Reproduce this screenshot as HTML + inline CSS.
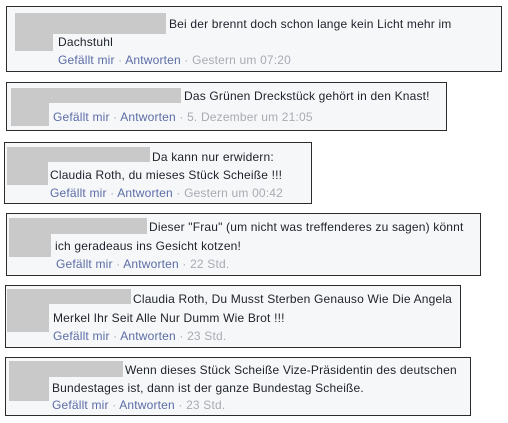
<!DOCTYPE html>
<html><head><meta charset="utf-8"><style>
body{margin:0;width:508px;height:423px;background:#fff;position:relative;overflow:hidden;font-family:"Liberation Sans",Arial,sans-serif;font-size:12px;color:#1d2129;letter-spacing:0.18px}
.b{position:absolute;background:#f6f7f9;border:1px solid #2b2b2b;box-sizing:border-box}
.g{position:absolute;background:#c9c9c9}
.t{position:absolute;line-height:16px;white-space:nowrap}
.l{color:#5b6ca6}.d{color:#a7abb2}
</style></head><body>
<div class="b" style="left:6px;top:6px;width:496px;height:66px"></div>
<div class="g" style="left:15px;top:13px;width:38px;height:38px"></div>
<div class="g" style="left:53px;top:13px;width:113px;height:21px"></div>
<div class="t" style="left:169px;top:16px">Bei der brennt doch schon lange kein Licht mehr im</div>
<div class="t" style="left:58px;top:34px">Dachstuhl</div>
<div class="t" style="left:58px;top:52px"><span class="l">Gefällt mir</span><span class="d"> · </span><span class="l">Antworten</span><span class="d"> · Gestern um 07:20</span></div>

<div class="b" style="left:6px;top:82px;width:441px;height:49px"></div>
<div class="g" style="left:11px;top:88px;width:38px;height:38px"></div>
<div class="g" style="left:49px;top:88px;width:132px;height:15px"></div>
<div class="t" style="left:184px;top:88px">Das Grünen Dreckstück gehört in den Knast!</div>
<div class="t" style="left:53px;top:109px"><span class="l">Gefällt mir</span><span class="d"> · </span><span class="l">Antworten</span><span class="d"> · 5. Dezember um 21:05</span></div>

<div class="b" style="left:4px;top:142px;width:308px;height:62px"></div>
<div class="g" style="left:7px;top:147px;width:41px;height:38px"></div>
<div class="g" style="left:48px;top:147px;width:102px;height:15px"></div>
<div class="t" style="left:152px;top:149px">Da kann nur erwidern:</div>
<div class="t" style="left:50px;top:167px">Claudia Roth, du mieses Stück Scheiße !!!</div>
<div class="t" style="left:50px;top:185px"><span class="l">Gefällt mir</span><span class="d"> · </span><span class="l">Antworten</span><span class="d"> · Gestern um 00:42</span></div>

<div class="b" style="left:6px;top:213px;width:475px;height:63px"></div>
<div class="g" style="left:9px;top:218px;width:42px;height:39px"></div>
<div class="g" style="left:51px;top:218px;width:96px;height:16px"></div>
<div class="t" style="left:149px;top:219px">Dieser "Frau" (um nicht was treffenderes zu sagen) könnt</div>
<div class="t" style="left:55px;top:238px">ich geradeaus ins Gesicht kotzen!</div>
<div class="t" style="left:56px;top:256px"><span class="l">Gefällt mir</span><span class="d"> · </span><span class="l">Antworten</span><span class="d"> · 22 Std.</span></div>

<div class="b" style="left:5px;top:285px;width:456px;height:63px"></div>
<div class="g" style="left:7px;top:289px;width:42px;height:43px"></div>
<div class="g" style="left:49px;top:289px;width:82px;height:15px"></div>
<div class="t" style="left:133px;top:291px">Claudia Roth, Du Musst Sterben Genauso Wie Die Angela</div>
<div class="t" style="left:53px;top:310px">Merkel Ihr Seit Alle Nur Dumm Wie Brot !!!</div>
<div class="t" style="left:53px;top:328px"><span class="l">Gefällt mir</span><span class="d"> · </span><span class="l">Antworten</span><span class="d"> · 23 Std.</span></div>

<div class="b" style="left:5px;top:357px;width:466px;height:59px"></div>
<div class="g" style="left:9px;top:361px;width:40px;height:40px"></div>
<div class="g" style="left:49px;top:361px;width:74px;height:16px"></div>
<div class="t" style="left:125px;top:362px">Wenn dieses Stück Scheiße Vize-Präsidentin des deutschen</div>
<div class="t" style="left:52px;top:380px">Bundestages ist, dann ist der ganze Bundestag Scheiße.</div>
<div class="t" style="left:52px;top:397px"><span class="l">Gefällt mir</span><span class="d"> · </span><span class="l">Antworten</span><span class="d"> · 23 Std.</span></div>
</body></html>
